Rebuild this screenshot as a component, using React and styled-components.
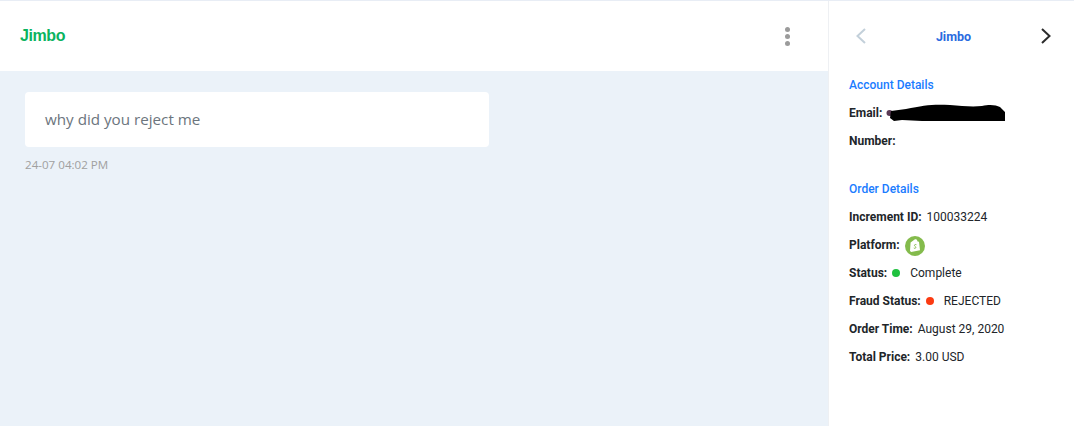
import React from "react";
import styled, { createGlobalStyle } from "styled-components";

const GlobalStyle = createGlobalStyle`
  html, body {
    margin: 0;
    padding: 0;
    background: #fff;
  }
`;

const orderRows = [
  { label: "Increment ID:", value: "100033224" },
  { label: "Platform:", icon: true },
  { label: "Status:", value: "Complete", dot: "#1fc13f" },
  { label: "Fraud Status:", value: "REJECTED", dot: "#fb3b12" },
  { label: "Order Time:", value: "August 29, 2020" },
  { label: "Total Price:", value: "3.00 USD" },
];

const ShopifyIcon = () => (
  <PlatformIcon viewBox="0 0 20 20">
    <circle cx="10" cy="10" r="10" fill="#84bb4c" />
    <path d="M5.6 6.6 9.6 3.6c1-.6 2.2-.2 2.6 1l.4 1 1.4.1 1 8.6-8.8 1.700-1.2-1z" fill="#fff" />
    <path
      d="M11.4 8.7c-.5-.3-1.7-.4-1.9.5-.2 1 1.5 1.2 1.3 2.4-.2.9-1.300.9-2 .4"
      fill="none"
      stroke="#84bb4c"
      strokeWidth="1"
    />
  </PlatformIcon>
);

const App = () => {
  return (
    <Page>
      <GlobalStyle />
      <Chat>
        <ChatHeader>
          <ChatName>Jimbo</ChatName>
          <MoreButton>
            <Dot />
            <Dot />
            <Dot />
          </MoreButton>
        </ChatHeader>
        <Messages>
          <Bubble>why did you reject me</Bubble>
          <Timestamp>24-07 04:02 PM</Timestamp>
        </Messages>
      </Chat>
      <Sidebar>
        <Pager>
          <Chevron viewBox="0 0 14 18" $muted>
            <path d="M11 2 3.500 9l7.500 7" />
          </Chevron>
          <PagerName>Jimbo</PagerName>
          <Chevron viewBox="0 0 14 18">
            <path d="M3 2l7.500 7L3 16" />
          </Chevron>
        </Pager>
        <Section>
          <SectionTitle>Account Details</SectionTitle>
          <Row>
            <Label>Email:</Label>
            <Redaction viewBox="0 0 120 20">
              <circle cx="3.500" cy="10" r="3" fill="#5a3a55" />
              <path d="M5 8 20 6C38 2 48 1 64 2c12 1 22 2 32 1 8-2 14-1 18 1l5 5v9H52l-16 0-20-1-8 1-4-3z" fill="#000" />
            </Redaction>
          </Row>
          <Row>
            <Label>Number:</Label>
          </Row>
        </Section>
        <Section $second>
          <SectionTitle>Order Details</SectionTitle>
          {orderRows.map((row) => (
            <Row key={row.label}>
              <Label>{row.label}</Label>
              {row.icon && <ShopifyIcon />}
              {row.dot && <StatusDot $color={row.dot} />}
              {row.value && <Value $spaced={!!row.dot}>{row.value}</Value>}
            </Row>
          ))}
        </Section>
      </Sidebar>
    </Page>
  );
};

const Page = styled.div`
  display: flex;
  width: 1074px;
  height: 426px;
  box-sizing: border-box;
  border-top: 1px solid #e8edf5;
  overflow: hidden;
`;

const Chat = styled.div`
  display: flex;
  flex-direction: column;
  width: 828px;
  flex-shrink: 0;
`;

const ChatHeader = styled.div`
  display: flex;
  align-items: center;
  justify-content: space-between;
  height: 70px;
  padding: 0 38px 0 20px;
  background: #fff;
`;

const ChatName = styled.div`
  font-family: "Liberation Sans", Arial, sans-serif;
  font-size: 16px;
  font-weight: 700;
  letter-spacing: -0.4px;
  color: #0bb35f;
`;

const MoreButton = styled.div`
  display: flex;
  flex-direction: column;
  gap: 2px;
`;

const Dot = styled.span`
  width: 5px;
  height: 5px;
  border-radius: 50%;
  background: #9b9b9b;
`;

const Messages = styled.div`
  flex: 1;
  padding: 21px 25px;
  background: #ebf2f9;
`;

const Bubble = styled.div`
  display: flex;
  align-items: center;
  box-sizing: border-box;
  width: 464px;
  height: 55px;
  padding: 0 0 2px 20px;
  border-radius: 4px;
  background: #fff;
  font-family: "Open Sans", sans-serif;
  font-size: 15.2px;
  color: #6c757d;
`;

const Timestamp = styled.div`
  margin-top: 9px;
  font-family: "Open Sans", sans-serif;
  font-size: 11.6px;
  line-height: 17px;
  color: #a0a0a0;
`;

const Sidebar = styled.div`
  flex: 1;
  box-sizing: border-box;
  padding: 0 19px 0 20px;
  border-left: 1px solid #eef0f3;
  background: #fff;
  font-family: Roboto, sans-serif;
`;

const Pager = styled.div`
  display: flex;
  align-items: center;
  justify-content: space-between;
  height: 70px;
  padding: 0 2px 0 5px;
`;

const PagerName = styled.div`
  font-size: 12.5px;
  font-weight: 700;
  color: #2a6be0;
`;

const Chevron = styled.svg`
  width: 14px;
  height: 18px;
  fill: none;
  stroke: ${(p) => (p.$muted ? "#c3d0da" : "#2b2b2b")};
  stroke-width: 2;
`;

const Section = styled.div`
  margin-top: ${(p) => (p.$second ? "20px" : "0")};
`;

const SectionTitle = styled.div`
  height: 28px;
  line-height: 28px;
  font-size: 12px;
  font-weight: 500;
  color: #1a7cff;
`;

const Row = styled.div`
  display: flex;
  align-items: center;
  height: 28px;
  font-size: 12px;
  color: #212529;
`;

const Label = styled.span`
  font-weight: 700;
  margin-right: 4px;
`;

const Value = styled.span`
  margin-left: ${(p) => (p.$spaced ? "10px" : "1px")};
`;

const StatusDot = styled.span`
  width: 8px;
  height: 8px;
  margin-left: 1px;
  border-radius: 50%;
  background: ${(p) => p.$color};
`;

const PlatformIcon = styled.svg`
  width: 20px;
  height: 20px;
  margin: 2px 0 0 1px;
`;

const Redaction = styled.svg`
  width: 120px;
  height: 20px;
`;

export default App;
